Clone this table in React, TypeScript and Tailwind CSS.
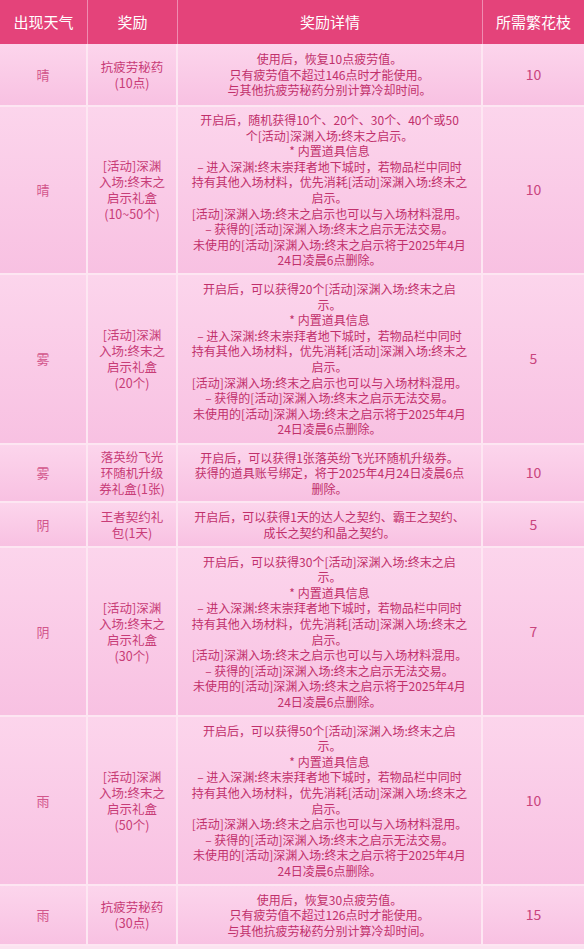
import React from "react";

type Row = {
  weather: string;
  reward: string[];
  detail: string[];
  cost: string;
  h: string;
};

const boxDetail = (n: string, first: string[]): string[] => [
  ...first,
  "* 内置道具信息",
  "– 进入深渊:终末崇拜者地下城时，若物品栏中同时",
  "持有其他入场材料，优先消耗[活动]深渊入场:终末之",
  "启示。",
  "[活动]深渊入场:终末之启示也可以与入场材料混用。",
  "– 获得的[活动]深渊入场:终末之启示无法交易。",
  "未使用的[活动]深渊入场:终末之启示将于2025年4月",
  "24日凌晨6点删除。",
];

const rows: Row[] = [
  {
    weather: "晴",
    reward: ["抗疲劳秘药", "(10点)"],
    detail: ["使用后，恢复10点疲劳值。", "只有疲劳值不超过146点时才能使用。", "与其他抗疲劳秘药分别计算冷却时间。"],
    cost: "10",
    h: "h-[63px]",
  },
  {
    weather: "晴",
    reward: ["[活动]深渊", "入场:终末之", "启示礼盒", "(10~50个)"],
    detail: boxDetail("", ["开启后，随机获得10个、20个、30个、40个或50", "个[活动]深渊入场:终末之启示。"]),
    cost: "10",
    h: "h-[168px]",
  },
  {
    weather: "雾",
    reward: ["[活动]深渊", "入场:终末之", "启示礼盒", "(20个)"],
    detail: boxDetail("", ["开启后，可以获得20个[活动]深渊入场:终末之启", "示。"]),
    cost: "5",
    h: "h-[170px]",
  },
  {
    weather: "雾",
    reward: ["落英纷飞光", "环随机升级", "券礼盒(1张)"],
    detail: ["开启后，可以获得1张落英纷飞光环随机升级券。", "获得的道具账号绑定，将于2025年4月24日凌晨6点", "删除。"],
    cost: "10",
    h: "h-[58px]",
  },
  {
    weather: "阴",
    reward: ["王者契约礼", "包(1天)"],
    detail: ["开启后，可以获得1天的达人之契约、霸王之契约、", "成长之契约和晶之契约。"],
    cost: "5",
    h: "h-[45px]",
  },
  {
    weather: "阴",
    reward: ["[活动]深渊", "入场:终末之", "启示礼盒", "(30个)"],
    detail: boxDetail("", ["开启后，可以获得30个[活动]深渊入场:终末之启", "示。"]),
    cost: "7",
    h: "h-[169px]",
  },
  {
    weather: "雨",
    reward: ["[活动]深渊", "入场:终末之", "启示礼盒", "(50个)"],
    detail: boxDetail("", ["开启后，可以获得50个[活动]深渊入场:终末之启", "示。"]),
    cost: "10",
    h: "h-[169px]",
  },
  {
    weather: "雨",
    reward: ["抗疲劳秘药", "(30点)"],
    detail: ["使用后，恢复30点疲劳值。", "只有疲劳值不超过126点时才能使用。", "与其他抗疲劳秘药分别计算冷却时间。"],
    cost: "15",
    h: "h-[60px]",
  },
];

const Lines = ({ lines }: { lines: string[] }) => (
  <div className="flex flex-col items-center">
    {lines.map((l, i) => (
      <span key={i} className="whitespace-nowrap">
        {l}
      </span>
    ))}
  </div>
);

export default function App() {
  return (
    <div
      className="w-[584px] h-[949px] bg-[#fbe3f0] overflow-hidden"
      style={{ fontFamily: '"Noto Sans CJK SC", "Noto Sans", sans-serif' }}
    >
      <div className="grid grid-cols-[88px_90px_305px_101px] h-[44px] bg-[#e4437a] text-white text-[15px]">
        <div className="flex items-center justify-center border-r border-[#ef8cb1]">出现天气</div>
        <div className="flex items-center justify-center border-r border-[#ef8cb1]">奖励</div>
        <div className="flex items-center justify-center border-r border-[#ef8cb1]">奖励详情</div>
        <div className="flex items-center justify-center">所需繁花枝</div>
      </div>
      {rows.map((r, i) => (
        <div
          key={i}
          className={`grid grid-cols-[88px_90px_305px_101px] ${r.h} border-b-2 border-[#fde6f2] bg-gradient-to-b from-[#fcd5ec] to-[#f8c1e2] text-[12px] leading-[15.6px]`}
        >
          <div className="flex items-center justify-center border-r-2 border-[#fde6f2] text-[#d2568b] text-[13px]">
            {r.weather}
          </div>
          <div className="flex items-center justify-center border-r-2 border-[#fde6f2] text-[#c83c77] text-[12.5px] leading-[16px]">
            <Lines lines={r.reward} />
          </div>
          <div className="flex items-center justify-center border-r-2 border-[#fde6f2] text-[#c1306b]">
            <Lines lines={r.detail} />
          </div>
          <div className="flex items-center justify-center text-[#c9447d] text-[14px]">{r.cost}</div>
        </div>
      ))}
    </div>
  );
}
